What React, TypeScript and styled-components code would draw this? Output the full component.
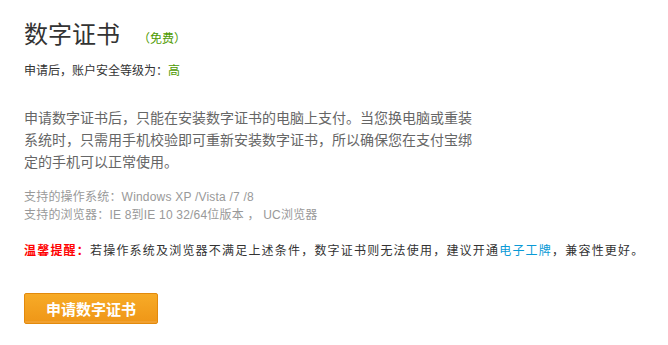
import React from 'react'
import styled, { createGlobalStyle } from 'styled-components'

const GlobalStyle = createGlobalStyle`
  html, body {
    margin: 0;
    padding: 0;
    background: #fff;
  }
  body {
    font-family: "Liberation Sans", "Noto Sans CJK SC", sans-serif;
    color: #333;
  }
`

const StyledWrapper = styled.div`
  padding: 20px 24px 0 24px;
  width: 620px;
`

const StyledTitleRow = styled.div`
  display: flex;
  align-items: baseline;
  height: 30px;
`

const StyledTitle = styled.h2`
  margin: 0;
  font-size: 24px;
  font-weight: normal;
  line-height: 30px;
  color: #333;
`

const StyledFree = styled.span`
  margin-left: 18px;
  font-size: 12px;
  color: #4d9a00;
`

const StyledLevel = styled.p`
  margin: 13px 0 0 0;
  font-size: 12px;
  line-height: 16px;
  color: #333;
`

const StyledGreen = styled.span`
  color: #4d9a00;
`

const StyledDesc = styled.p`
  margin: 28px 0 0 0;
  width: 460px;
  font-size: 14px;
  line-height: 22px;
  color: #666;
`

const StyledSupport = styled.div`
  margin-top: 15px;
  font-size: 12px;
  line-height: 18px;
  letter-spacing: 0.2px;
  color: #999;
`

const StyledTip = styled.p`
  margin: 18px 0 0 0;
  font-size: 12px;
  line-height: 18px;
  letter-spacing: 1.2px;
  white-space: nowrap;
  color: #333;
`

const StyledTipLabel = styled.strong`
  color: #f00;
  font-weight: bold;
`

const StyledLink = styled.a`
  color: #0a9ad6;
  text-decoration: none;
  cursor: pointer;
`

const StyledButton = styled.button`
  margin-top: 33px;
  width: 134px;
  height: 31px;
  padding: 0;
  border: 1px solid #e38a0c;
  border-radius: 2px;
  background: linear-gradient(to bottom, #f7ab27 0%, #ef9617 100%);
  box-shadow: inset 0 -2px 0 #f0a030;
  color: #fff;
  font-family: "Noto Sans CJK SC", sans-serif;
  font-size: 15px;
  font-weight: bold;
  cursor: pointer;
`

const App: React.FC = () => {
  return (
    <>
      <GlobalStyle />
      <StyledWrapper>
        <StyledTitleRow>
          <StyledTitle>数字证书</StyledTitle>
          <StyledFree>（免费）</StyledFree>
        </StyledTitleRow>
        <StyledLevel>
          申请后，账户安全等级为：<StyledGreen>高</StyledGreen>
        </StyledLevel>
        <StyledDesc>
          申请数字证书后，只能在安装数字证书的电脑上支付。当您换电脑或重装系统时，只需用手机校验即可重新安装数字证书，所以确保您在支付宝绑定的手机可以正常使用。
        </StyledDesc>
        <StyledSupport>
          <div>支持的操作系统：Windows XP /Vista /7 /8</div>
          <div>支持的浏览器：IE 8到IE 10 32/64位版本 ， UC浏览器</div>
        </StyledSupport>
        <StyledTip>
          <StyledTipLabel>温馨提醒：</StyledTipLabel>
          若操作系统及浏览器不满足上述条件，数字证书则无法使用，建议开通
          <StyledLink>电子工牌</StyledLink>，兼容性更好。
        </StyledTip>
        <StyledButton>申请数字证书</StyledButton>
      </StyledWrapper>
    </>
  )
}

export default App
